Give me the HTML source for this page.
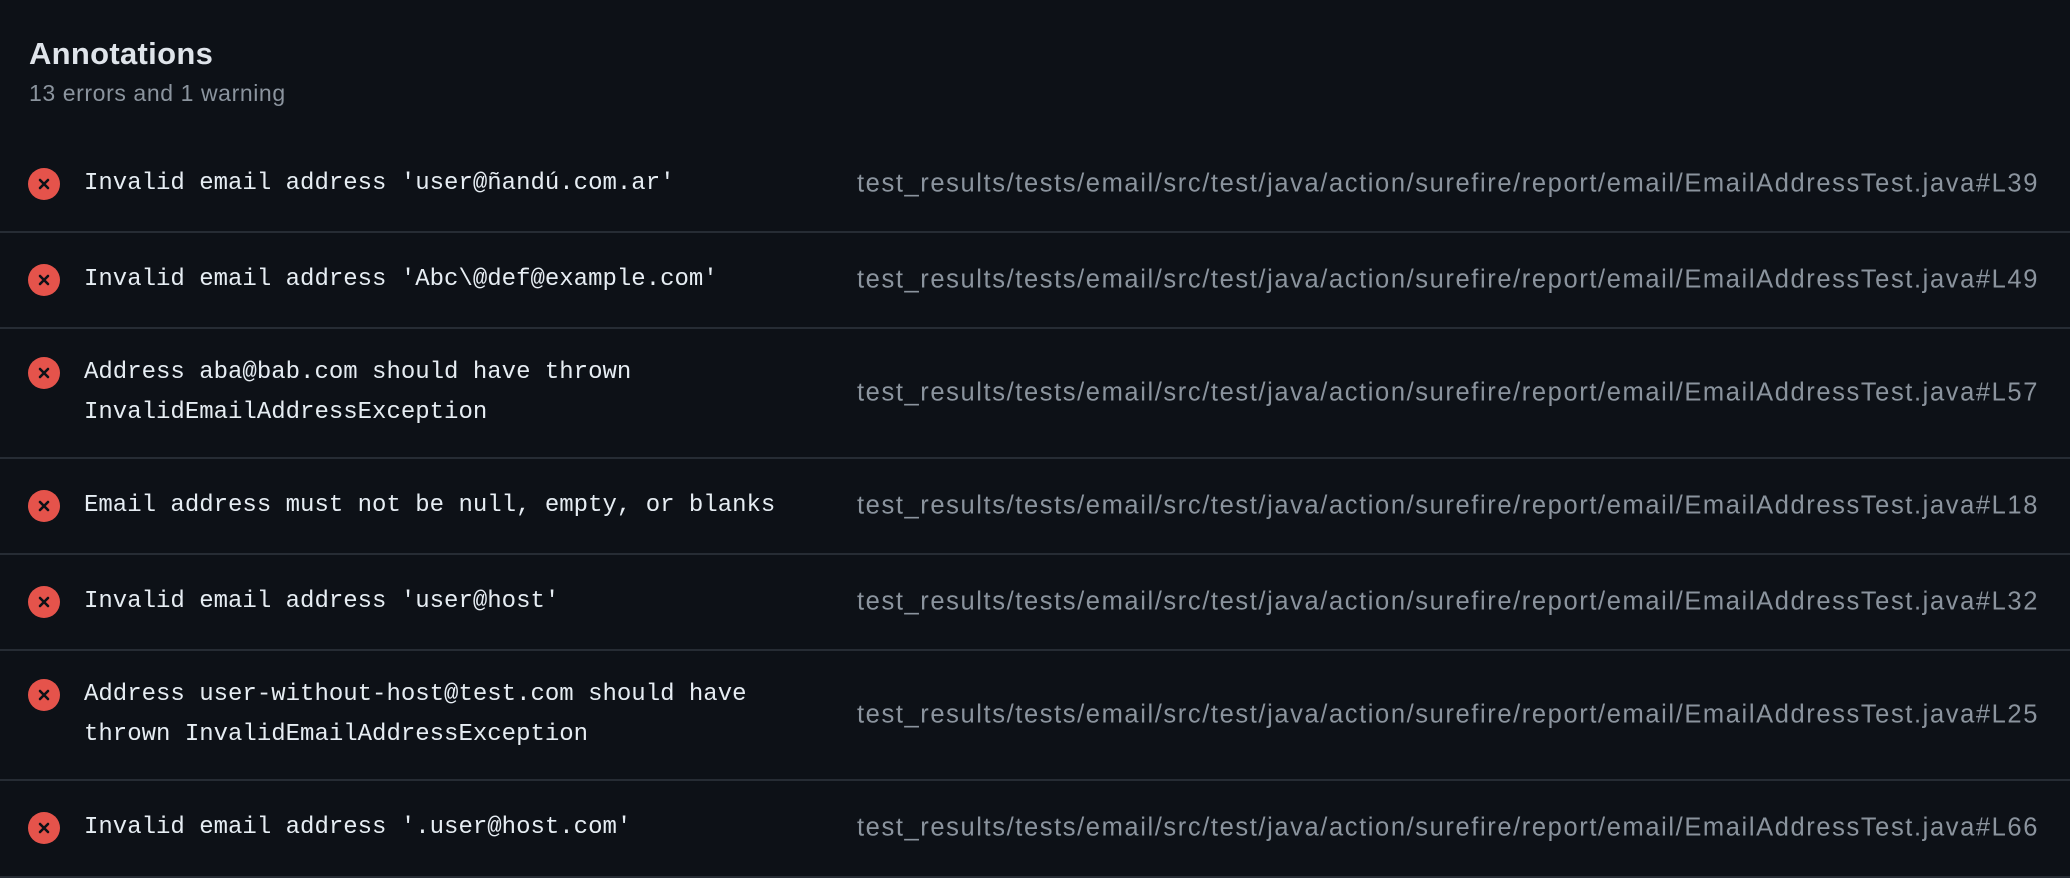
<!DOCTYPE html>
<html><head><meta charset="utf-8"><style>
html,body{margin:0;padding:0;background:#0d1117;width:2070px;height:878px;overflow:hidden}
body{position:relative;font-family:"Liberation Sans",sans-serif}
.t{position:absolute;left:29px;top:36px;font-size:31px;font-weight:bold;color:#dfe4ea;letter-spacing:0.3px}
.s{position:absolute;left:29px;top:80px;font-size:23px;color:#8b949e;letter-spacing:0.6px}
.row{position:absolute;left:0;width:2070px;border-bottom:2px solid #262c34;box-sizing:border-box}
.ic{position:absolute;left:28px;width:32px;height:32px;margin-top:-16px}
.m{position:absolute;left:84px;font-family:"Liberation Mono",monospace;font-size:24px;line-height:40px;color:#e6edf3;transform:translateY(-50%)}
.p{position:absolute;right:31px;font-size:25.5px;letter-spacing:1.6px;color:#8b949e;transform:translateY(-50%);white-space:nowrap}
</style></head><body>
<div class="t">Annotations</div>
<div class="s">13 errors and 1 warning</div>

<div class="row" style="top:137px;height:96px">
<svg class="ic" style="top:47px" viewBox="0 0 32 32"><circle cx="16" cy="16" r="16" fill="#e5534b"/><path d="M12 12L20 20M20 12L12 20" stroke="#0d1117" stroke-width="2.6" stroke-linecap="round"/></svg>
<div class="m" style="top:47px">Invalid email address 'user@ñandú.com.ar'</div>
<div class="p" style="top:47px">test_results/tests/email/src/test/java/action/surefire/report/email/EmailAddressTest.java#L39</div></div>

<div class="row" style="top:233px;height:96px">
<svg class="ic" style="top:47px" viewBox="0 0 32 32"><circle cx="16" cy="16" r="16" fill="#e5534b"/><path d="M12 12L20 20M20 12L12 20" stroke="#0d1117" stroke-width="2.6" stroke-linecap="round"/></svg>
<div class="m" style="top:47px">Invalid email address 'Abc\@def@example.com'</div>
<div class="p" style="top:47px">test_results/tests/email/src/test/java/action/surefire/report/email/EmailAddressTest.java#L49</div></div>

<div class="row" style="top:329px;height:130px">
<svg class="ic" style="top:44px" viewBox="0 0 32 32"><circle cx="16" cy="16" r="16" fill="#e5534b"/><path d="M12 12L20 20M20 12L12 20" stroke="#0d1117" stroke-width="2.6" stroke-linecap="round"/></svg>
<div class="m" style="top:64px">Address aba@bab.com should have thrown<br>InvalidEmailAddressException</div>
<div class="p" style="top:64px">test_results/tests/email/src/test/java/action/surefire/report/email/EmailAddressTest.java#L57</div></div>

<div class="row" style="top:459px;height:96px">
<svg class="ic" style="top:47px" viewBox="0 0 32 32"><circle cx="16" cy="16" r="16" fill="#e5534b"/><path d="M12 12L20 20M20 12L12 20" stroke="#0d1117" stroke-width="2.6" stroke-linecap="round"/></svg>
<div class="m" style="top:47px">Email address must not be null, empty, or blanks</div>
<div class="p" style="top:47px">test_results/tests/email/src/test/java/action/surefire/report/email/EmailAddressTest.java#L18</div></div>

<div class="row" style="top:555px;height:96px">
<svg class="ic" style="top:47px" viewBox="0 0 32 32"><circle cx="16" cy="16" r="16" fill="#e5534b"/><path d="M12 12L20 20M20 12L12 20" stroke="#0d1117" stroke-width="2.6" stroke-linecap="round"/></svg>
<div class="m" style="top:47px">Invalid email address 'user@host'</div>
<div class="p" style="top:47px">test_results/tests/email/src/test/java/action/surefire/report/email/EmailAddressTest.java#L32</div></div>

<div class="row" style="top:651px;height:130px">
<svg class="ic" style="top:44px" viewBox="0 0 32 32"><circle cx="16" cy="16" r="16" fill="#e5534b"/><path d="M12 12L20 20M20 12L12 20" stroke="#0d1117" stroke-width="2.6" stroke-linecap="round"/></svg>
<div class="m" style="top:64px">Address user-without-host@test.com should have<br>thrown InvalidEmailAddressException</div>
<div class="p" style="top:64px">test_results/tests/email/src/test/java/action/surefire/report/email/EmailAddressTest.java#L25</div></div>

<div class="row" style="top:781px;height:97px">
<svg class="ic" style="top:47px" viewBox="0 0 32 32"><circle cx="16" cy="16" r="16" fill="#e5534b"/><path d="M12 12L20 20M20 12L12 20" stroke="#0d1117" stroke-width="2.6" stroke-linecap="round"/></svg>
<div class="m" style="top:47px">Invalid email address '.user@host.com'</div>
<div class="p" style="top:47px">test_results/tests/email/src/test/java/action/surefire/report/email/EmailAddressTest.java#L66</div></div>
</body></html>
